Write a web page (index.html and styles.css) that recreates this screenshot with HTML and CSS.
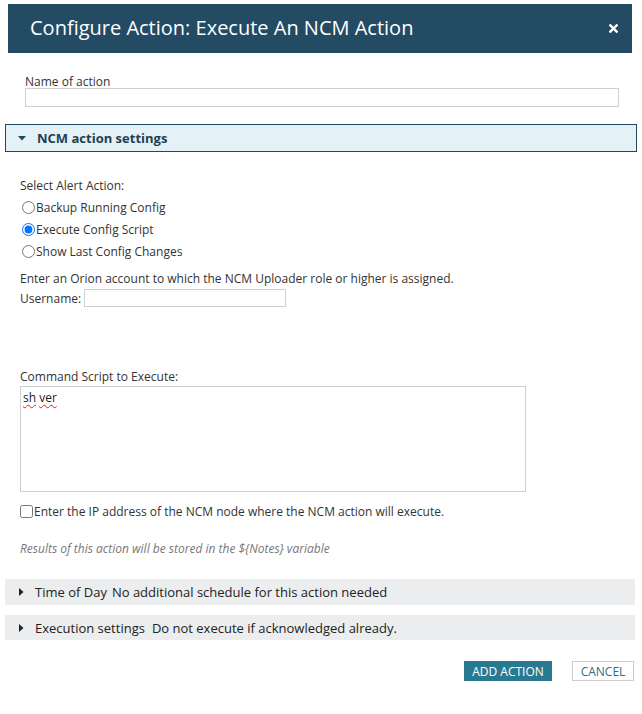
FILE: index.html
```html
<!DOCTYPE html>
<html>
<head>
<meta charset="utf-8">
<link rel="stylesheet" href="styles.css">
</head>
<body>
<div class="dialog">
  <div class="header">
    <span class="title">Configure Action: Execute An NCM Action</span>
    <svg class="close" width="9" height="9" viewBox="0 0 10 10"><path d="M1.5 1.5 L8.5 8.5 M8.5 1.5 L1.5 8.5" stroke="#fff" stroke-width="2.6" stroke-linecap="square"/></svg>
  </div>

  <div class="name-block">
    <div class="label">Name of action</div>
    <input class="name-input" type="text">
  </div>

  <div class="section-head">
    <svg class="tri-down" width="8" height="5" viewBox="0 0 8 5"><path d="M0 0 L8 0 L4 4.5 Z" fill="#1e4a60"/></svg>
    <span>NCM action settings</span>
  </div>

  <div class="settings">
    <div class="line">Select Alert Action:</div>
    <label class="line opt"><input type="radio" name="a">Backup Running Config</label>
    <label class="line opt"><input type="radio" name="a" checked>Execute Config Script</label>
    <label class="line opt"><input type="radio" name="a">Show Last Config Changes</label>

    <div class="account">Enter an Orion account to which the NCM Uploader role or higher is assigned.</div>
    <div class="user-row">Username:<input class="user-input" type="text"></div>

    <div class="cmd-label">Command Script to Execute:</div>
    <div class="textarea"><span class="spell">sh</span> <span class="spell">ver</span></div>

    <label class="check-row"><input type="checkbox">Enter the IP address of the NCM node where the NCM action will execute.</label>

    <div class="note">Results of this action will be stored in the ${Notes} variable</div>
  </div>

  <div class="bar bar-first">
    <svg class="tri-right" width="5" height="8" viewBox="0 0 5 8"><path d="M0 0 L4.5 4 L0 8 Z" fill="#222"/></svg>
    <span class="bar-title">Time of Day</span><span class="bar-desc">No additional schedule for this action needed</span>
  </div>
  <div class="bar">
    <svg class="tri-right" width="5" height="8" viewBox="0 0 5 8"><path d="M0 0 L4.5 4 L0 8 Z" fill="#222"/></svg>
    <span class="bar-title">Execution settings</span><span class="bar-desc wide">Do not execute if acknowledged already.</span>
  </div>

  <div class="buttons">
    <button class="btn primary">ADD ACTION</button>
    <button class="btn secondary">CANCEL</button>
  </div>
</div>
</body>
</html>
```

FILE: styles.css
```css
html, body {
  margin: 0;
  padding: 0;
  background: #fff;
}
body {
  font-family: "Open Sans", "DejaVu Sans", sans-serif;
  font-size: 12px;
  color: #333;
}
.dialog {
  width: 642px;
  padding-top: 4px;
}
.header {
  margin: 0 10px 0 8px;
  height: 49px;
  background: #234b63;
  display: flex;
  align-items: center;
  justify-content: space-between;
  padding: 0 14px 0 22px;
  box-sizing: border-box;
}
.title {
  color: #fff;
  font-size: 20px;
  line-height: 24px;
  position: relative;
  top: -1px;
}
.close {
  display: block;
}
.name-block {
  padding: 0 23px 0 25px;
  margin-top: 21px;
}
.label {
  line-height: 16px;
  height: 14px;
}
.name-input {
  display: block;
  box-sizing: border-box;
  width: 594px;
  height: 19px;
  margin: 0;
  border: 1px solid #cfcfcf;
  padding: 0;
  outline: none;
}
.section-head {
  margin: 17px 5px 0 5px;
  height: 28px;
  box-sizing: border-box;
  border: 1px solid #1e4a60;
  background: #e4f2f7;
  display: flex;
  align-items: center;
  padding-left: 12px;
  font-weight: bold;
  font-size: 13px;
  color: #1f3f52;
}
.tri-down {
  margin-right: 11px;
}
.settings {
  padding-left: 20px;
  margin-top: 22px;
}
.line {
  display: flex;
  align-items: center;
  height: 22px;
}
.opt input {
  margin: 0 1px 0 2px;
  width: 13px;
  height: 13px;
}
.account {
  margin-top: 8px;
  line-height: 18px;
  height: 18px;
}
.user-row {
  display: flex;
  align-items: center;
  height: 20px;
}
.user-input {
  box-sizing: border-box;
  width: 202px;
  height: 18px;
  margin: 0 0 0 3px;
  border: 1px solid #cfcfcf;
  padding: 0;
  outline: none;
}
.cmd-label {
  margin-top: 60px;
  line-height: 18px;
  height: 18px;
}
.textarea {
  box-sizing: border-box;
  width: 506px;
  height: 106px;
  border: 1px solid #cfcfcf;
  padding: 3px 2px;
  font-size: 12px;
  line-height: 16px;
  color: #222;
}
.spell {
  text-decoration: underline wavy #e02020;
  text-decoration-thickness: 1px;
  text-underline-offset: 2px;
}
.check-row {
  display: flex;
  align-items: center;
  height: 20px;
  margin-top: 9px;
}
.check-row input {
  margin: 0 1px 0 0;
  width: 13px;
  height: 13px;
}
.note {
  margin-top: 19px;
  font-style: italic;
  color: #777;
  font-size: 12px;
  line-height: 18px;
  height: 18px;
}
.bar {
  margin: 10px 7px 0 5px;
  height: 25px;
  background: #ecedef;
  display: flex;
  align-items: center;
  padding-left: 14px;
  font-size: 13px;
  color: #222;
}
.bar-first {
  margin-top: 21px;
  height: 26px;
}
.tri-right {
  margin-right: 11px;
}
.bar-title {
  margin-right: 5px;
}
.bar-desc.wide {
  margin-left: 2px;
}
.buttons {
  display: flex;
  justify-content: flex-end;
  gap: 20px;
  margin: 21px 8px 0 0;
}
.btn {
  font-family: "Open Sans", "DejaVu Sans", sans-serif;
  font-size: 12px;
  height: 20px;
  box-sizing: border-box;
  padding: 0;
  cursor: pointer;
}
.primary {
  width: 88px;
  background: #297a90;
  color: #fff;
  border: none;
}
.secondary {
  width: 62px;
  background: #fff;
  color: #2d6e86;
  border: 1px solid #cdcdcd;
}
```
